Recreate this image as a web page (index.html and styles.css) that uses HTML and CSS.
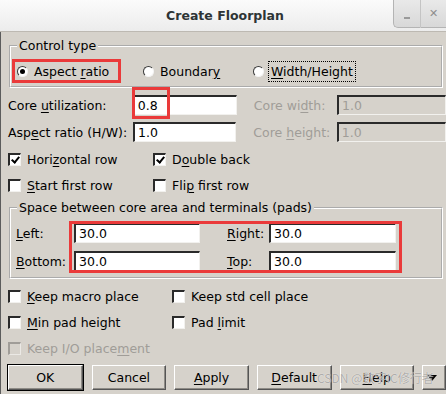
FILE: index.html
```html
<!DOCTYPE html>
<html lang="en">
<head>
    <meta charset="UTF-8">
    <meta name="viewport" content="width=device-width, initial-scale=1.0">
    <title>Create Floorplan</title>
    <link rel="stylesheet" href="styles.css">
</head>
<body>
    <div class="titlebar">
        <span class="title">Create Floorplan</span>
        <div class="wm-buttons">
            <span class="wm-btn wm-min"><span class="dash"></span></span>
            <span class="wm-btn wm-close">✕</span>
        </div>
    </div>

    <div class="dialog">
        <fieldset class="group group-control">
            <legend>Control type</legend>
            <div class="radio-row">
                <label class="radio marked"><span class="radio-dot checked"></span><span>Aspect <u>r</u>atio</span></label>
                <label class="radio boundary"><span class="radio-dot"></span><span>Boundar<u>y</u></span></label>
                <label class="radio wh"><span class="radio-dot"></span><span class="focus"><u>W</u>idth/Height</span></label>
            </div>
        </fieldset>

        <div class="form-row first">
            <span class="label1">Core <u>u</u>tilization:</span>
            <span class="entry-wrap">
                <span class="entry">0.8</span>
                <span class="mark-box"></span>
            </span>
            <span class="label2">Core wi<u>d</u>th:</span>
            <span class="entry disabled">1.0</span>
        </div>
        <div class="form-row">
            <span class="label1">Asp<u>e</u>ct ratio (H/W):</span>
            <span class="entry">1.0</span>
            <span class="label2">Core <u>h</u>eight:</span>
            <span class="entry disabled">1.0</span>
        </div>

        <div class="check-row">
            <label class="check"><span class="box on"></span><span>Hori<u>z</u>ontal row</span></label>
            <label class="check"><span class="box on"></span><span>D<u>o</u>uble back</span></label>
        </div>
        <div class="check-row tight">
            <label class="check"><span class="box"></span><span><u>S</u>tart first row</span></label>
            <label class="check"><span class="box"></span><span>Fli<u>p</u> first row</span></label>
        </div>

        <fieldset class="group group-space">
            <legend>Space between core area and terminals (pads)</legend>
            <div class="pad-grid">
                <span class="pad-label"><u>L</u>eft:</span>
                <span class="entry">30.0</span>
                <span class="pad-label right"><u>R</u>ight:</span>
                <span class="entry">30.0</span>
                <span class="pad-label"><u>B</u>ottom:</span>
                <span class="entry">30.0</span>
                <span class="pad-label right"><u>T</u>op:</span>
                <span class="entry">30.0</span>
                <span class="mark-area"></span>
            </div>
        </fieldset>

        <div class="check-row lower first-lower">
            <label class="check"><span class="box"></span><span><u>K</u>eep macro place</span></label>
            <label class="check"><span class="box"></span><span>Keep std cell place</span></label>
        </div>
        <div class="check-row lower tight">
            <label class="check"><span class="box"></span><span><u>M</u>in pad height</span></label>
            <label class="check"><span class="box"></span><span>Pad <u>l</u>imit</span></label>
        </div>
        <div class="check-row lower tight">
            <label class="check off"><span class="box"></span><span>Keep I/O place<u>m</u>ent</span></label>
        </div>

        <div class="button-row">
            <button type="button" class="btn default-btn">OK</button>
            <button type="button" class="btn">Cancel</button>
            <button type="button" class="btn"><u>A</u>pply</button>
            <button type="button" class="btn"><u>D</u>efault</button>
            <button type="button" class="btn"><u>H</u>elp</button>
            <button type="button" class="btn arrow-btn"><span class="tri"></span></button>
        </div>
    </div>

    <span class="watermark">CSDN @数字IC修行者</span>
</body>
</html>
```

FILE: styles.css
```css
body {
    margin: 0;
    width: 446px;
    height: 394px;
    overflow: hidden;
    position: relative;
    background: #d6d2cb;
    font-family: "DejaVu Sans", sans-serif;
    font-size: 12.5px;
    color: #000;
}
u {
    text-decoration-thickness: 1px;
    text-underline-offset: 2px;
}
.titlebar {
    height: 32px;
    box-sizing: border-box;
    display: grid;
    grid-template-columns: 1fr auto 1fr;
    align-items: start;
    background: linear-gradient(#fbfbfb, #ececec);
    border-bottom: 1px solid #bdb9b2;
}
.title {
    grid-column: 2;
    line-height: 32px;
    font-weight: bold;
    color: #2e3436;
    padding-left: 4px;
}
.wm-buttons {
    grid-column: 3;
    justify-self: end;
    display: flex;
    height: 28px;
}
.wm-btn {
    height: 28px;
    box-sizing: border-box;
    display: flex;
    align-items: center;
    justify-content: center;
    background: linear-gradient(#e9e9e9, #d8d8d8);
    border-bottom: 1px solid #b4b4b4;
    color: #8e8e8e;
}
.wm-min {
    width: 28px;
    border-left: 1px solid #b4b4b4;
    border-right: 1px solid #c4c4c4;
    border-bottom-left-radius: 5px;
}
.wm-min .dash {
    width: 6px;
    height: 2px;
    margin-top: 8px;
    background: #9a9a9a;
}
.wm-close {
    width: 25px;
    font-size: 11px;
    font-weight: bold;
}
.dialog {
    border-left: 1px solid #5c5c5c;
    padding: 6px 0 0 7px;
    height: 362px;
}
.group {
    margin: 0 3px 0 1px;
    padding: 0;
    border: 2px groove #fff;
    min-width: 0;
}
.group legend {
    margin-left: 6px;
    padding: 0 2px;
    line-height: 15px;
}
.radio-row {
    display: flex;
    padding: 6px 0 3px 1px;
}
.radio {
    display: flex;
    align-items: center;
    gap: 6px;
    height: 24px;
    box-sizing: border-box;
}
.radio-dot {
    width: 11px;
    height: 11px;
    box-sizing: border-box;
    border-radius: 50%;
    background: #fff;
    border: 1.5px solid;
    border-color: #3a3a3a #f4f4f4 #f4f4f4 #3a3a3a;
    display: flex;
    align-items: center;
    justify-content: center;
}
.radio-dot.checked::after {
    content: "";
    width: 5px;
    height: 5px;
    border-radius: 50%;
    background: #000;
}
.marked {
    width: 109px;
    border: 3px solid #ea3a3a;
    padding-left: 2px;
}
.boundary {
    margin-left: 22px;
    width: 110px;
}
.wh {
    gap: 4px;
}
.focus {
    border: 1px dotted #000;
    padding: 2px 2px 2px 2px;
}
.form-row {
    display: flex;
    align-items: center;
    height: 20px;
    margin-top: 7px;
}
.label1 {
    width: 126px;
}
.label2 {
    margin-left: 17px;
    width: 84px;
    color: #a09d98;
}
.entry {
    display: block;
    width: 104px;
    height: 20px;
    box-sizing: border-box;
    padding: 0 3px;
    line-height: 17px;
    background: #fff;
    border-style: solid;
    border-width: 2px 1px 1px 2px;
    border-color: #2a2a2a #f2f1ee #f2f1ee #2a2a2a;
}
.entry.disabled {
    width: 110px;
    background: transparent;
    color: #a09d98;
}
.entry-wrap {
    position: relative;
}
.mark-box {
    position: absolute;
    left: -1px;
    top: -8px;
    width: 38px;
    height: 32px;
    box-sizing: border-box;
    border: 3px solid #ea3a3a;
}
.check-row {
    display: flex;
    align-items: center;
    height: 20px;
    margin-top: 7px;
}
.check-row.tight {
    margin-top: 6px;
}
.check {
    display: flex;
    align-items: center;
    gap: 6px;
    width: 145px;
}
.lower .check {
    width: 164px;
}
.box {
    width: 13px;
    height: 13px;
    box-sizing: border-box;
    background: #fff;
    border-style: solid;
    border-width: 2px 1px 1px 2px;
    border-color: #2a2a2a #f2f1ee #f2f1ee #2a2a2a;
    position: relative;
}
.box.on::after {
    content: "";
    position: absolute;
    left: 3px;
    top: 0;
    width: 3px;
    height: 6px;
    border: solid #000;
    border-width: 0 2px 2px 0;
    transform: rotate(40deg);
}
.check.off {
    color: #a09d98;
}
.check.off .box {
    background: transparent;
    border-color: #a09d98 #ebe9e5 #ebe9e5 #a09d98;
}
.group-space {
    margin-top: 5px;
}
.pad-grid {
    position: relative;
    display: grid;
    grid-template-columns: 58px 126px 69px 127px;
    grid-auto-rows: 20px;
    row-gap: 8px;
    align-items: center;
    padding: 8px 0 6px 5px;
}
.pad-grid .entry {
    width: auto;
}
.pad-label.right {
    padding-left: 27px;
}
.mark-area {
    position: absolute;
    left: 58px;
    top: 6px;
    width: 333px;
    height: 52px;
    box-sizing: border-box;
    border: 3px solid #ea3a3a;
}
.first-lower {
    margin-top: 7px;
}
.button-row {
    display: flex;
    gap: 8px;
    margin-top: 7px;
    padding-left: 0;
}
.btn {
    width: 75px;
    height: 25px;
    padding: 0;
    font: inherit;
    color: #000;
    background: #d6d2cb;
    border-style: solid;
    border-width: 1px;
    border-color: #fff #555 #555 #fff;
    box-shadow: inset -1px -1px 0 #8e8b86;
}
.default-btn {
    outline: 1px solid #000;
    margin-right: 1px;
}
.arrow-btn {
    width: 24px;
    display: flex;
    align-items: center;
    padding-left: 4px;
}
.tri {
    width: 0;
    height: 0;
    border-left: 5px solid transparent;
    border-right: 5px solid transparent;
    border-top: 6px solid #000;
}
.watermark {
    position: absolute;
    left: 317px;
    top: 369px;
    font-family: "Noto Sans CJK SC", sans-serif;
    font-size: 12px;
    color: rgba(150, 148, 145, 0.75);
    text-shadow: 0 0 1px #fff;
}
```
